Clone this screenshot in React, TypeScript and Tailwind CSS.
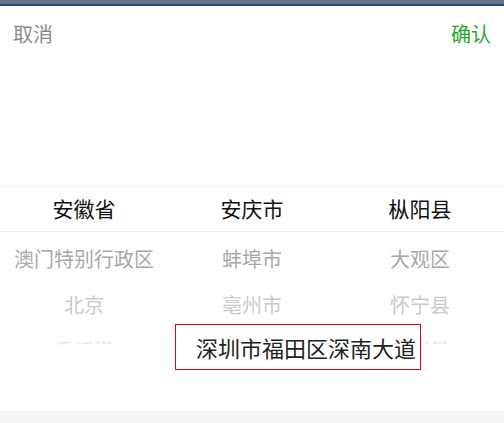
const font = { fontFamily: '"Noto Sans CJK SC", "Noto Sans", sans-serif' };

const columns = [
  { head: "安徽省", rows: ["澳门特别行政区", "北京", "天津市"] },
  { head: "安庆市", rows: ["蚌埠市", "亳州市", "滁州市"] },
  { head: "枞阳县", rows: ["大观区", "怀宁县", "潜山县"] },
];

export default function App() {
  return (
    <div className="relative w-[504px] h-[423px] bg-white flex flex-col overflow-hidden" style={font}>
      <div className="h-[4px] bg-[#6b7682]" />
      <div className="h-[2px] bg-[#1f4c85]" />

      <div className="h-[56px] flex items-center justify-between px-[13px] text-[20px]">
        <span className="text-[#8a8a8a]">取消</span>
        <span className="text-[#22a82a]">确认</span>
      </div>

      <div className="h-[124px]" />

      <div className="h-[46px] grid grid-cols-3 border-y border-[#ececec] text-[21px] text-[#111]">
        {columns.map((c) => (
          <div key={c.head} className="flex items-center justify-center">{c.head}</div>
        ))}
      </div>

      <div className="flex-1 grid grid-cols-3 pt-[4px] text-[20px]">
        {columns.map((c) => (
          <div key={c.head} className="flex flex-col items-center">
            <div className="h-[46px] flex items-center text-[#a8a8a8]">{c.rows[0]}</div>
            <div className="h-[46px] flex items-center text-[#cacaca]">{c.rows[1]}</div>
            <div className="h-[6px] mt-[12px] flex items-center text-[#e2e2e2] scale-y-[0.12] origin-center">{c.rows[2]}</div>
          </div>
        ))}
      </div>

      <div className="h-[12px] bg-[#f4f4f4]" />

      <div className="absolute left-[175px] top-[324px] w-[246px] h-[46px] border border-[#e3001b] bg-white flex items-center pl-[20px] text-[22px] text-[#222]">
        深圳市福田区深南大道
      </div>
    </div>
  );
}
